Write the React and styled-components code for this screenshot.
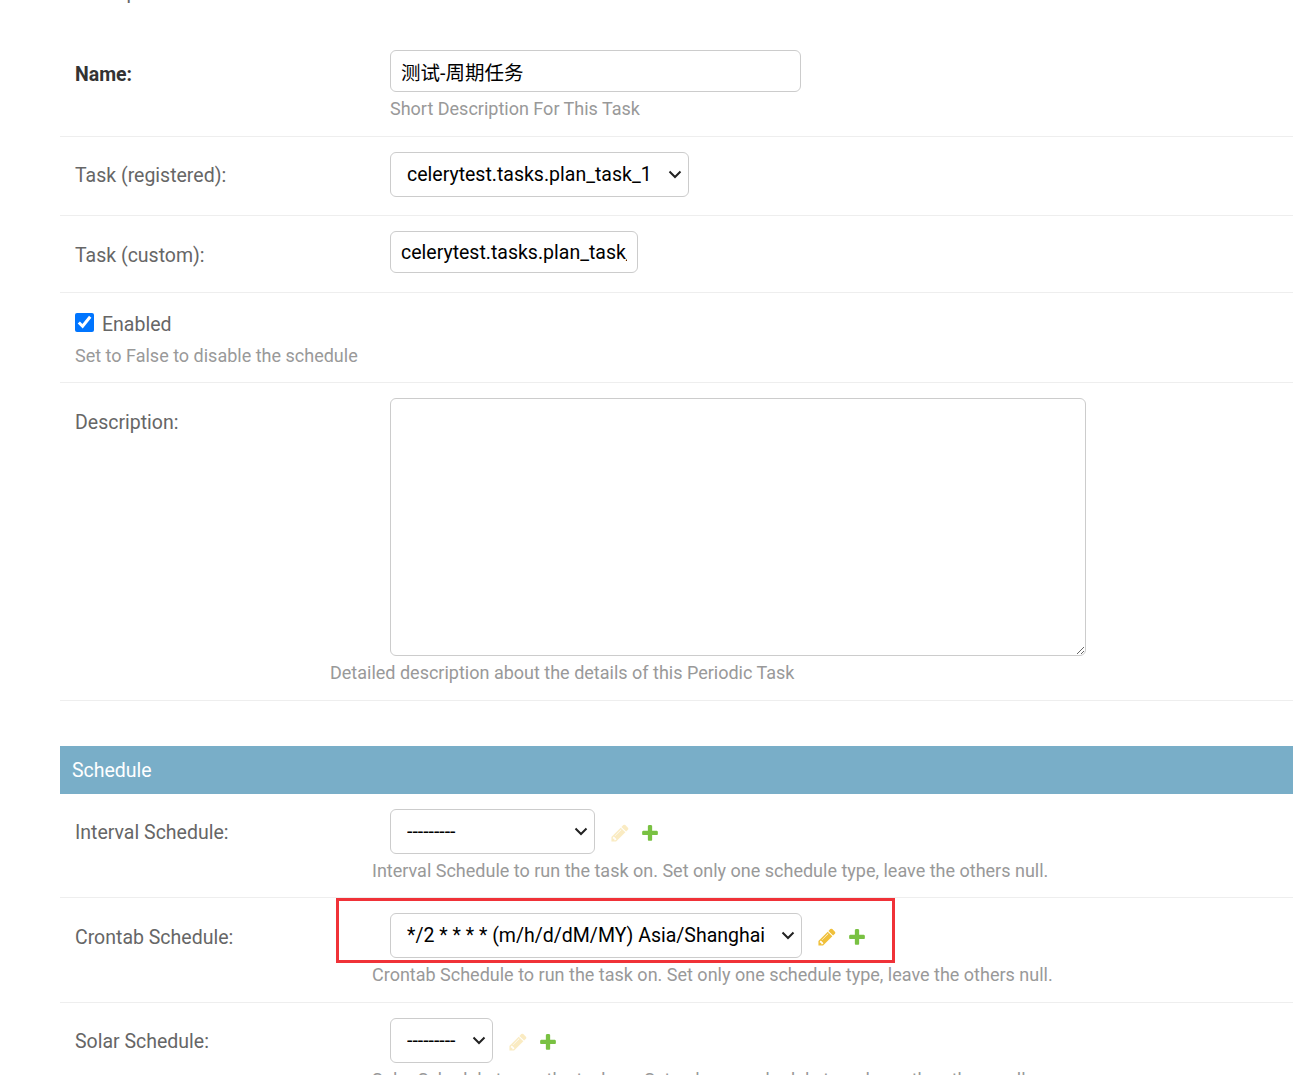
import styled, { createGlobalStyle } from "styled-components";

const chevron =
  "data:image/svg+xml,%3Csvg xmlns='http://www.w3.org/2000/svg' width='14' height='9' viewBox='0 0 14 9'%3E%3Cpath d='M1.5 1.5L7 7l5.5-5.5' fill='none' stroke='%23222' stroke-width='2'/%3E%3C/svg%3E";

const Global = createGlobalStyle`
  html, body {
    margin: 0;
    height: 1075px;
    overflow: hidden;
    background: #fff;
  }
  body {
    font-family: Roboto, "Noto Sans CJK SC", sans-serif;
    font-size: 19.5px;
    color: #666;
  }
`;

const Page = styled.div`
  padding-left: 60px;
  height: 1075px;
  overflow: hidden;
`;

const Clipped = styled.div`
  height: 51px;
  margin-top: -16px;
  padding-left: 18px;
  line-height: 18px;
`;

const Row = styled.div`
  position: relative;
  display: flex;
  flex-wrap: wrap;
  padding: 15px 15px ${(p) => p.$bottom || 15}px;
  border-bottom: 1px solid #eee;
`;

const Label = styled.label`
  width: 315px;
  flex-shrink: 0;
  padding-top: ${(p) => p.$top || 13}px;
  font-weight: ${(p) => (p.$strong ? 700 : 400)};
  color: ${(p) => (p.$strong ? "#333" : "#666")};
  line-height: 22px;
`;

const Field = styled.div`
  display: flex;
  flex-direction: column;
  align-items: flex-start;
`;

const Help = styled.div`
  color: #999;
  font-size: 18px;
  line-height: 22px;
  margin-top: ${(p) => p.$top || 0}px;
  margin-left: ${(p) => p.$left || 0}px;
  white-space: nowrap;
`;

const TextInput = styled.input`
  box-sizing: border-box;
  width: ${(p) => p.$width}px;
  height: 42px;
  padding: 0 10px;
  border: 1px solid #ccc;
  border-radius: 6px;
  background: #fff;
  font-family: Roboto, "Noto Sans CJK SC", sans-serif;
  font-size: 19.5px;
  color: #000;
  outline: none;
`;

const Select = styled.select`
  box-sizing: border-box;
  width: ${(p) => p.$width}px;
  height: 45px;
  padding: 0 30px 0 16px;
  border: 1px solid #ccc;
  border-radius: 6px;
  appearance: none;
  background: #fff url("${chevron}") no-repeat right 6px center;
  font-family: Roboto, sans-serif;
  font-size: 19.5px;
  color: #000;
`;

const SelectLine = styled.div`
  display: flex;
  align-items: center;
`;

const Links = styled.div`
  display: flex;
  align-items: center;
  gap: 10px;
  margin-left: 15px;
  margin-top: 2px;
`;

const Check = styled.div`
  display: flex;
  align-items: flex-start;
  gap: 8px;
  width: 100%;
  padding-top: 6px;
  line-height: 22px;
`;

const Checkbox = styled.input`
  width: 19px;
  height: 19px;
  margin: -1px 0 0;
  accent-color: #0075ff;
`;

const TextArea = styled.textarea`
  box-sizing: border-box;
  display: block;
  width: 696px;
  height: 258px;
  border: 1px solid #ccc;
  border-radius: 6px;
  background: #fff;
  outline: none;
`;

const Heading = styled.h2`
  margin: 45px 0 0;
  height: 48px;
  padding-left: 12px;
  background: #79aec8;
  color: #fff;
  font-size: 19.5px;
  font-weight: 400;
  line-height: 50px;
`;

const Marker = styled.div`
  position: absolute;
  left: 276px;
  top: 0;
  width: 559px;
  height: 65px;
  box-sizing: border-box;
  border: 3px solid #f03238;
  pointer-events: none;
`;

const Pencil = ({ faded }) => (
  <svg width="20" height="20" viewBox="0 0 1792 1792" opacity={faded ? 0.3 : 1}>
    <path
      fill="#f0c03a"
      d="M491 1536l91-91-235-235-91 91v107h128v128h107zm523-928q0-22-22-22-10 0-17 7l-542 542q-7 7-7 17 0 22 22 22 10 0 17-7l542-542q7-7 7-17zm-54-192l416 416-832 832h-416v-416zm683 96q0 53-37 90l-166 166-416-416 166-165q36-38 90-38 53 0 91 38l235 234q37 39 37 91z"
    />
  </svg>
);

const Plus = () => (
  <svg width="20" height="20" viewBox="0 0 1792 1792">
    <path
      fill="#79c142"
      d="M1600 796v192q0 40-28 68t-68 28h-416v416q0 40-28 68t-68 28h-192q-40 0-68-28t-28-68v-416h-416q-40 0-68-28t-28-68v-192q0-40 28-68t68-28h416v-416q0-40 28-68t68-28h192q40 0 68 28t28 68v416h416q40 0 68 28t28 68z"
    />
  </svg>
);

const ScheduleRow = ({ label, width, value, faded, help, bottom, labelTop, children }) => (
  <Row $bottom={bottom}>
    <Label $top={labelTop}>{label}</Label>
    <Field>
      <SelectLine>
        <Select $width={width} defaultValue={value}>
          <option>{value}</option>
        </Select>
        <Links>
          <Pencil faded={faded} />
          <Plus />
        </Links>
      </SelectLine>
    </Field>
    <Help $left={297} $top={6}>
      {help}
    </Help>
    {children}
  </Row>
);

const App = () => {
  return (
    <Page>
      <Global />
      <Clipped>Example</Clipped>
      <Row $bottom={16}>
        <Label $strong $top={14}>
          Name:
        </Label>
        <Field>
          <TextInput $width={411} defaultValue="测试-周期任务" />
          <Help $top={6}>Short Description For This Task</Help>
        </Field>
      </Row>
      <Row $bottom={18}>
        <Label>Task (registered):</Label>
        <Select $width={299} defaultValue="celerytest.tasks.plan_task_1">
          <option>celerytest.tasks.plan_task_1</option>
        </Select>
      </Row>
      <Row $bottom={19}>
        <Label $top={14}>Task (custom):</Label>
        <TextInput $width={248} defaultValue="celerytest.tasks.plan_task_1" />
      </Row>
      <Row>
        <Check>
          <Checkbox type="checkbox" defaultChecked />
          <span>Enabled</span>
        </Check>
        <Help $top={9}>Set to False to disable the schedule</Help>
      </Row>
      <Row $bottom={16}>
        <Label $top={14}>Description:</Label>
        <TextArea />
        <Help $left={255} $top={6}>
          Detailed description about the details of this Periodic Task
        </Help>
      </Row>
      <Heading>Schedule</Heading>
      <ScheduleRow
        label="Interval Schedule:"
        width={205}
        value="---------"
        faded
        bottom={15}
        help="Interval Schedule to run the task on. Set only one schedule type, leave the others null."
      />
      <ScheduleRow
        label="Crontab Schedule:"
        width={412}
        value="*/2 * * * * (m/h/d/dM/MY) Asia/Shanghai"
        labelTop={14}
        bottom={16}
        help="Crontab Schedule to run the task on. Set only one schedule type, leave the others null."
      >
        <Marker />
      </ScheduleRow>
      <ScheduleRow
        label="Solar Schedule:"
        width={103}
        value="---------"
        faded
        help="Solar Schedule to run the task on. Set only one schedule type, leave the others null."
      />
    </Page>
  );
};

export default App;
